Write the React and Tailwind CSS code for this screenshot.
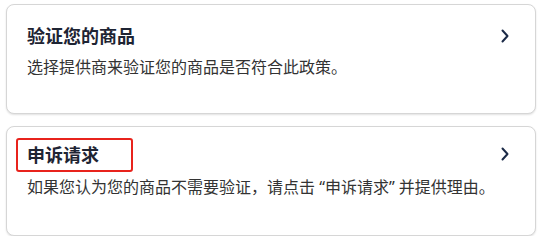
import React from "react";

const Chevron = () => (
  <svg width="10" height="14" viewBox="0 0 10 14" fill="none" className="shrink-0">
    <path d="M2.5 1.5 L7.5 7 L2.5 12.5" stroke="#1b2a47" strokeWidth="2" strokeLinecap="round" strokeLinejoin="round" />
  </svg>
);

const Card = ({ title, body, highlight, top }) => (
  <div className="h-[110px] rounded-lg border border-[#d6d6d6] bg-white shadow-[0_1px_2px_rgba(0,0,0,0.12)]">
    <div className={`flex items-start justify-between pl-[20px] pr-[25px] ${top}`}>
      <div>
        <div className="relative inline-block">
          <h3 className="text-[18px] font-bold leading-[26px] text-[#1e2433]">{title}</h3>
          {highlight && (
            <span className="pointer-events-none absolute left-[-11px] top-[-4px] h-[34px] w-[117px] rounded-[3px] border-2 border-[#e8231c]" />
          )}
        </div>
        <p className={`whitespace-nowrap text-[16px] leading-[24px] text-[#333] ${highlight ? "mt-[7px]" : "mt-[6px]"}`}>{body}</p>
      </div>
      <div className={highlight ? "mt-[5px]" : "mt-[6px]"}>
        <Chevron />
      </div>
    </div>
  </div>
);

export default function App() {
  return (
    <div
      className="flex w-[541px] flex-col gap-[12px] bg-white pl-[6px] pr-[5px] pt-[4px]"
      style={{ fontFamily: '"Noto Sans", "Noto Sans CJK SC", sans-serif' }}
    >
      <Card
        title="验证您的商品"
        body="选择提供商来验证您的商品是否符合此政策。"
        top="pt-[18px]"
      />
      <Card
        title="申诉请求"
        body={"如果您认为您的商品不需要验证，请点击 \u201c申诉请求\u201d 并提供理由。"}
        highlight
        top="pt-[15px]"
      />
    </div>
  );
}
